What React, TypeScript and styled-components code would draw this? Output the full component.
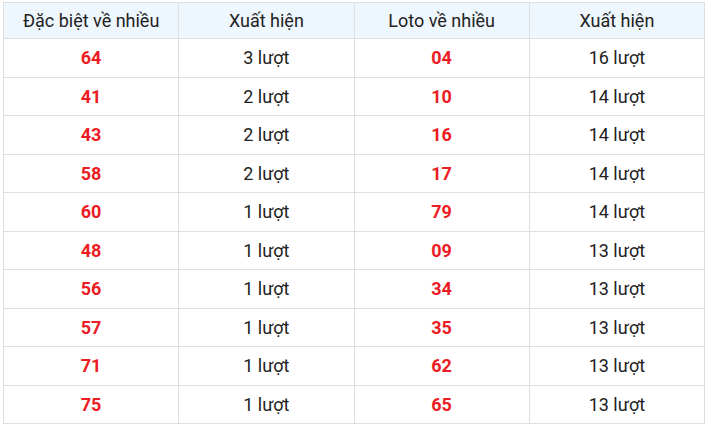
import React from "react";
import styled, { createGlobalStyle } from "styled-components";

const Global = createGlobalStyle`
  html, body { margin: 0; padding: 0; background: #ffffff; }
  body { font-family: Roboto, "Noto Sans", "Liberation Sans", sans-serif; }
`;

const Wrap = styled.div`
  padding: 2px 5px 0 3px;
`;

const Table = styled.table`
  width: 702px;
  border-collapse: collapse;
  table-layout: fixed;
  color: #222222;
`;

const Th = styled.th`
  border: 1px solid #dddfe2;
  background: #eef6fe;
  font-weight: 400;
  font-size: 18px;
  line-height: 25px;
  padding: 5px 4px;
  text-align: center;
`;

const Td = styled.td`
  border: 1px solid #dddfe2;
  font-size: 18px;
  line-height: 25.5px;
  padding: 6px 4px;
  text-align: center;
`;

const Num = styled(Td)`
  color: #ec1c24;
  font-weight: 700;
  font-size: 18px;
`;

const rows: [string, number, string, number][] = [
  ["64", 3, "04", 16],
  ["41", 2, "10", 14],
  ["43", 2, "16", 14],
  ["58", 2, "17", 14],
  ["60", 1, "79", 14],
  ["48", 1, "09", 13],
  ["56", 1, "34", 13],
  ["57", 1, "35", 13],
  ["71", 1, "62", 13],
  ["75", 1, "65", 13],
];

export default function App() {
  return (
    <Wrap>
      <Global />
      <Table>
        <thead>
          <tr>
            <Th>Đặc biệt về nhiều</Th>
            <Th>Xuất hiện</Th>
            <Th>Loto về nhiều</Th>
            <Th>Xuất hiện</Th>
          </tr>
        </thead>
        <tbody>
          {rows.map(([a, b, c, d], i) => (
            <tr key={i}>
              <Num>{a}</Num>
              <Td>{b} lượt</Td>
              <Num>{c}</Num>
              <Td>{d} lượt</Td>
            </tr>
          ))}
        </tbody>
      </Table>
    </Wrap>
  );
}
